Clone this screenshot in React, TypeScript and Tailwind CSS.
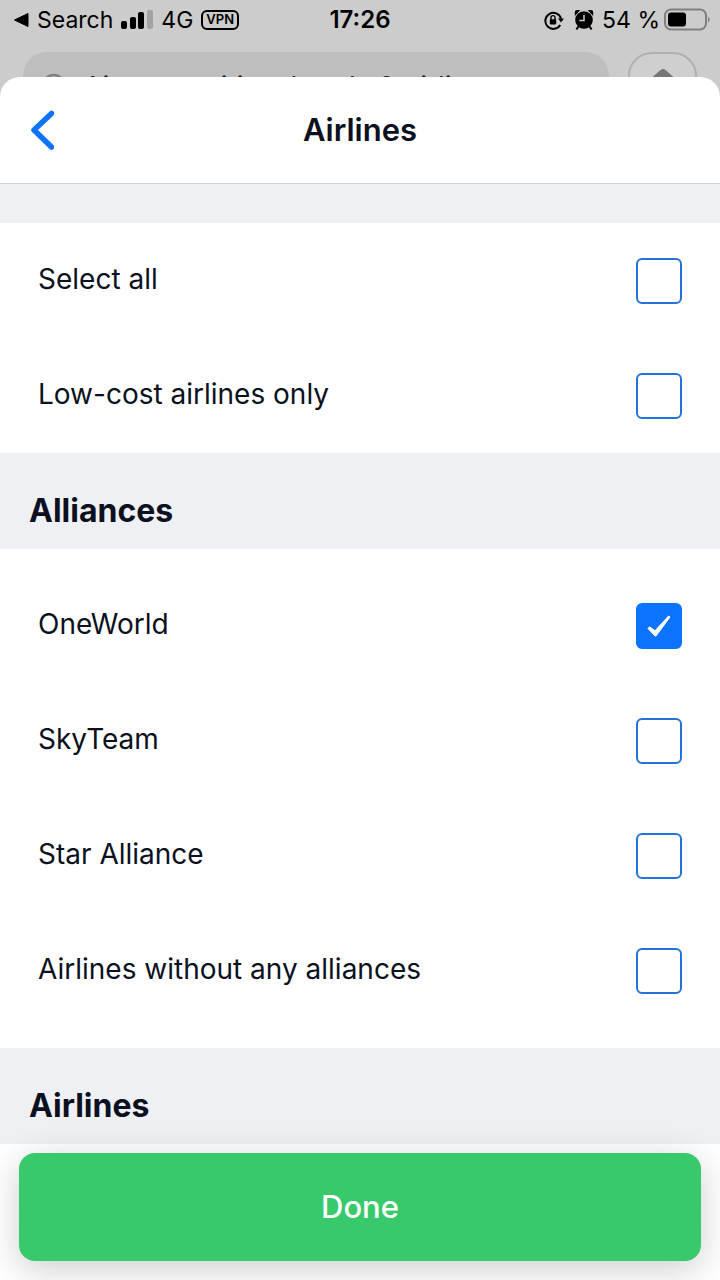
import { useState } from 'react';
import { Search } from 'lucide-react';

const filters = ['Select all', 'Low-cost airlines only'];
const alliances = ['OneWorld', 'SkyTeam', 'Star Alliance', 'Airlines without any alliances'];

function StatusBar() {
  return (
    <div className="grid h-10 shrink-0 grid-cols-[1fr_auto_1fr] items-center text-[23px] text-black">
      <div className="flex items-center pl-[13px]">
        <svg className="mr-2 h-4 w-4" viewBox="0 0 16 16" aria-hidden="true">
          <path d="M1.5 8 L15 1.5 V14.5 Z" stroke="black" strokeWidth="1" strokeLinejoin="round" />
        </svg>
        <span>Search</span>
        <svg className="ml-2 h-5 w-8" viewBox="0 0 32 20" aria-hidden="true">
          <rect x="0" y="11" width="6" height="8" rx="2" />
          <rect x="9" y="7" width="6" height="12" rx="2" />
          <rect x="17" y="2" width="6" height="17" rx="2" />
          <rect x="26" y="0" width="6" height="19" rx="2" fill="#a3a3a3" />
        </svg>
        <span className="ml-2">4G</span>
        <span className="ml-2 flex h-5 items-center rounded-md border-2 border-black px-[3px] text-[13px] font-semibold">VPN</span>
      </div>
      <span className="text-2xl font-semibold">17:26</span>
      <div className="flex items-center justify-end pr-2">
        <svg className="mr-2 h-5 w-5" viewBox="0 0 20 20" fill="none" aria-hidden="true">
          <path d="M16.2 15 A8 8 0 1 1 17 8.6" stroke="black" strokeWidth="2" />
          <path d="M14 8.4 H20 L17 12.6 Z" fill="black" />
          <path d="M7 10 V7.6 A2 2 0 0 1 11 7.6 V10" stroke="black" strokeWidth="1.4" />
          <rect x="5.8" y="9.2" width="6.4" height="5.2" rx="0.8" fill="black" />
        </svg>
        <svg className="mr-2 ml-0.5 h-5 w-5" viewBox="0 0 20 20" fill="none" aria-hidden="true">
          <circle cx="10" cy="10" r="8.8" fill="black" />
          <path d="M0.8 6 V2 Q0.8 0 3 0 H6.4 Z" fill="black" />
          <path d="M19.2 6 V2 Q19.2 0 17 0 H13.6 Z" fill="black" />
          <path d="M4.5 16.5 L2.8 18.8 M15.5 16.5 L17.2 18.8" stroke="black" strokeWidth="2" strokeLinecap="round" />
          <path d="M10 5 V10.6 H5.4" stroke="#cccccc" strokeWidth="1.5" />
        </svg>
        <span>54 %</span>
        <svg className="ml-1 h-6 w-12" viewBox="0 0 48 24" aria-hidden="true">
          <rect x="1" y="1.5" width="41" height="20" rx="6" fill="none" stroke="#808080" strokeWidth="2" />
          <rect x="4" y="4.5" width="18" height="14" rx="3" />
          <path d="M44 8.5 A3.5 3.5 0 0 1 44 14.5 Z" fill="#808080" />
        </svg>
      </div>
    </div>
  );
}

function CheckRow({ label, checked, onToggle }: { label: string; checked: boolean; onToggle: () => void }) {
  return (
    <label className="flex h-[115px] items-center justify-between px-[38px] text-[28px]">
      <span className="pb-[3px]">{label}</span>
      <span className="grid shrink-0 place-items-center">
        <input
          type="checkbox"
          checked={checked}
          onChange={onToggle}
          className="col-start-1 row-start-1 h-[46px] w-[46px] appearance-none rounded-md border-2 border-[#2473dc] bg-white checked:border-[#0c73fe] checked:bg-[#0c73fe]"
        />
        {checked && (
          <svg className="pointer-events-none col-start-1 row-start-1 h-6 w-6" viewBox="0 0 24 24" fill="white" aria-hidden="true">
            <path d="M1 14.5 L2.6 12.8 L8 16.8 L21.5 2 L23 3 L9 22 H8 Z" stroke="white" strokeWidth="1" strokeLinejoin="round" />
          </svg>
        )}
      </span>
    </label>
  );
}

function SectionTitle({ children }: { children: string }) {
  return <h2 className="bg-[#eff0f4] px-[29px] pt-[38px] pb-[18px] text-[32px] leading-10 font-bold">{children}</h2>;
}

export default function App() {
  const [selected, setSelected] = useState<string[]>(['OneWorld']);

  const toggle = (name: string) => {
    setSelected((current) =>
      current.includes(name) ? current.filter((item) => item !== name) : [...current, name]
    );
  };

  const renderRow = (name: string) => (
    <CheckRow key={name} label={name} checked={selected.includes(name)} onToggle={() => toggle(name)} />
  );

  return (
    <div className="flex h-screen flex-col overflow-hidden bg-[#cccccc] font-['Inter',sans-serif] text-[#0b1120]">
      <StatusBar />

      {/* search bar, mostly covered by the sheet */}
      <div className="flex h-[37px] shrink-0 items-start gap-[19px] overflow-hidden px-[23px] pt-3">
        <label className="flex h-[69px] flex-1 items-center gap-3 rounded-3xl bg-[#bebebe] px-4">
          <Search className="h-8 w-8 text-[#808080]" />
          <input
            type="search"
            aria-label="Search"
            placeholder="Airports, cities, hotels & airlines"
            className="min-w-0 flex-1 bg-transparent text-[28px] placeholder:text-[#222222]"
          />
        </label>
        <button aria-label="Up" className="flex h-[69px] w-[69px] items-center justify-center rounded-3xl border-2 border-[#b0b0b0] bg-[#cfcfcf]">
          <svg className="h-9 w-9" viewBox="0 0 36 36" fill="#777777" aria-hidden="true">
            <path d="M15.5 1 Q18 -1 20.5 1 L33 12 Q36 16 32 16 H25 V34 H11 V16 H4 Q0 16 3 12 Z" />
          </svg>
        </button>
      </div>

      <main className="flex min-h-0 flex-1 flex-col rounded-t-[20px] bg-white">
        <header className="grid h-[107px] shrink-0 grid-cols-[1fr_auto_1fr] items-center border-b border-[#d3d4d8] px-[30px]">
          <button aria-label="Back" className="justify-self-start">
            <svg className="h-10 w-6" viewBox="0 0 24 40" fill="none" aria-hidden="true">
              <path d="M21.5 3.5 L4 20 L21.5 37" stroke="#0c73fe" strokeWidth="5.5" strokeLinecap="round" strokeLinejoin="round" />
            </svg>
          </button>
          <h1 className="text-[31px] font-semibold">Airlines</h1>
        </header>

        <div className="min-h-0 flex-1 overflow-hidden">
          <div className="h-[39px] bg-[#eff0f4]" />
          <div>{filters.map(renderRow)}</div>
          <SectionTitle>Alliances</SectionTitle>
          <div className="pt-[19px] pb-5">{alliances.map(renderRow)}</div>
          <SectionTitle>Airlines</SectionTitle>
        </div>

        <footer className="shrink-0 px-[19px] pt-[9px] pb-[19px]">
          <button className="h-[108px] w-full rounded-2xl bg-[#38c96a] text-[31px] font-medium text-white shadow-[0_8px_36px_rgba(0,0,0,0.2)]">
            Done
          </button>
        </footer>
      </main>
    </div>
  );
}
